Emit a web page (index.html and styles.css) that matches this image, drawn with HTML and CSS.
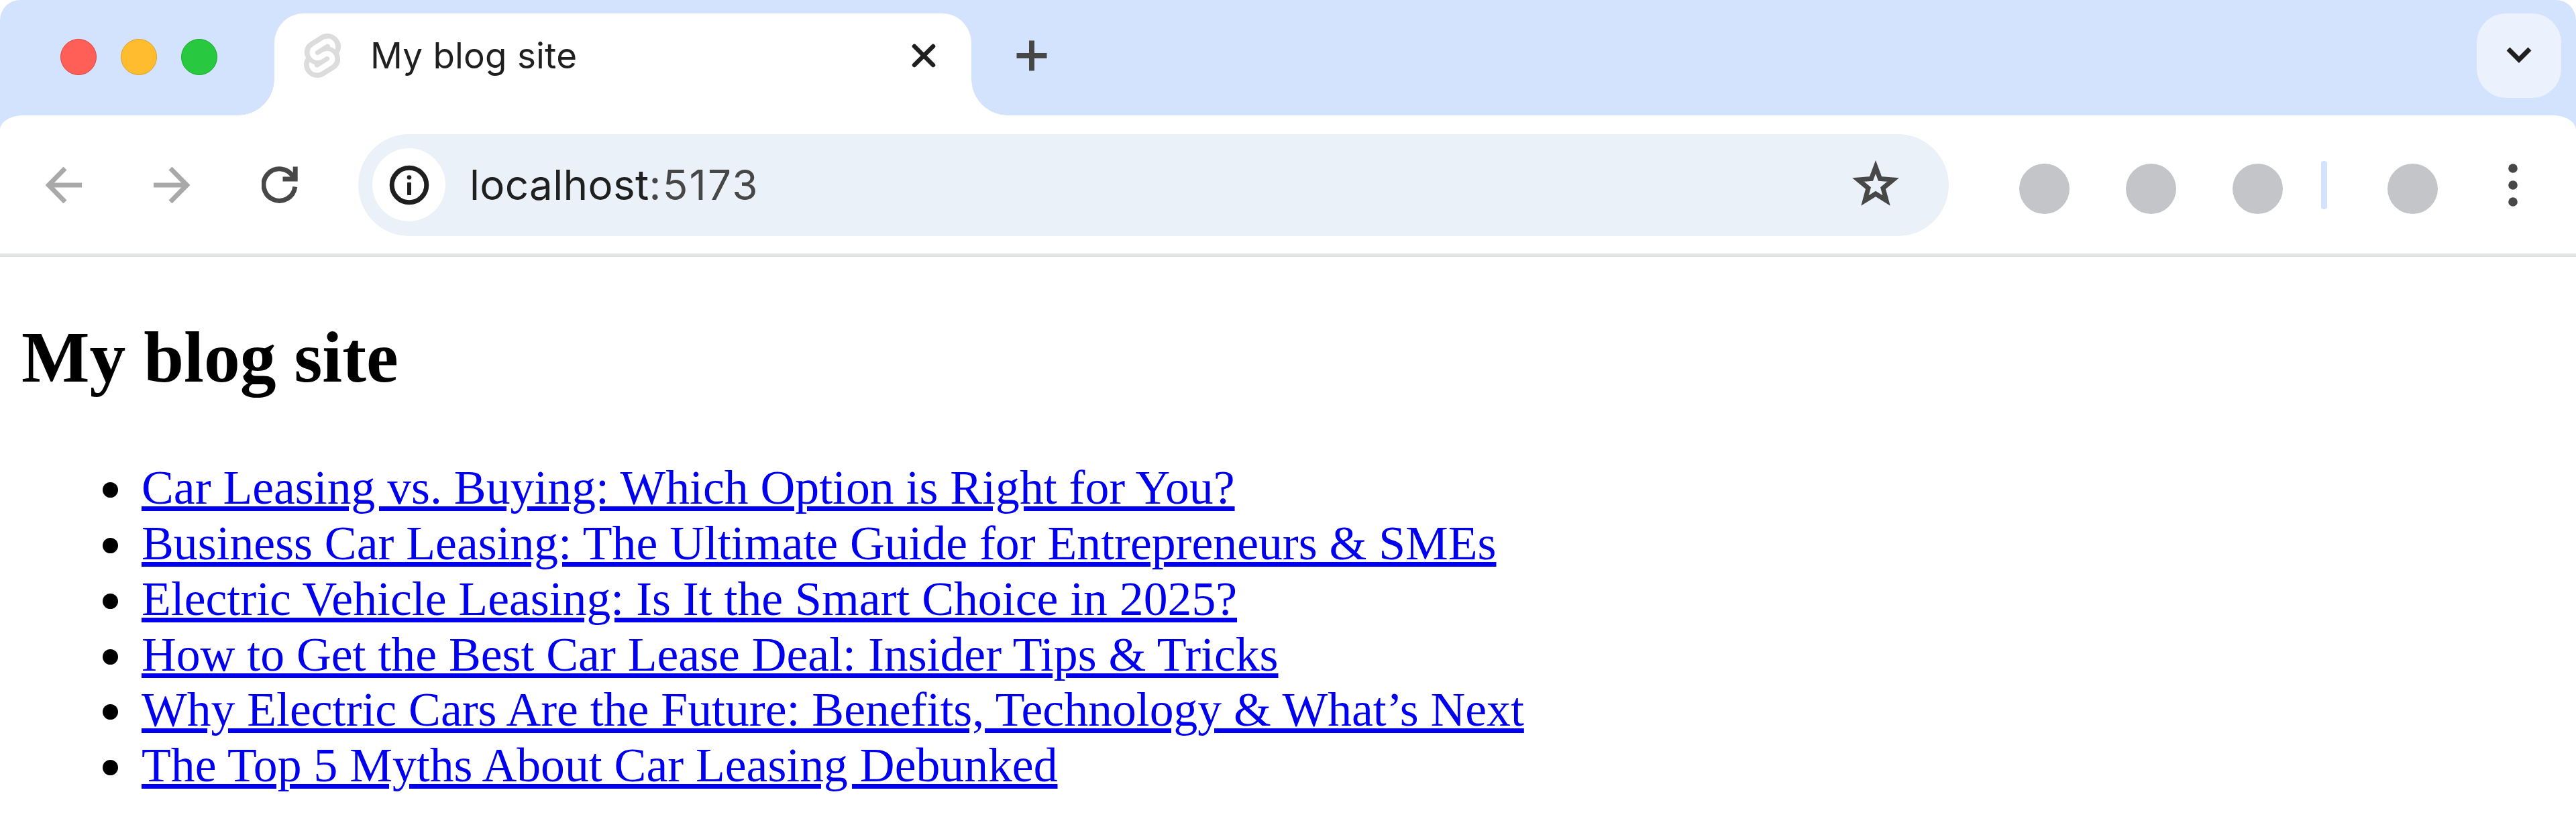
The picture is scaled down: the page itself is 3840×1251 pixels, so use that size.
FILE: index.html
```
<!DOCTYPE html>
<html lang="en">
<head>
    <meta charset="UTF-8">
    <meta name="viewport" content="width=device-width, initial-scale=1.0">
    <title>My blog site</title>
    <link rel="stylesheet" href="styles.css">
</head>
<body>
    <div class="browser">
        <!-- Tab strip -->
        <div class="tab-strip">
            <div class="window-buttons">
                <span class="dot red"></span>
                <span class="dot yellow"></span>
                <span class="dot green"></span>
            </div>

            <div class="tab">
                <svg class="favicon" viewBox="2 0 20 24" preserveAspectRatio="none">
                    <path d="M10.354 21.125a4.44 4.44 0 0 1-4.765-1.767 4.109 4.109 0 0 1-.703-3.107 3.898 3.898 0 0 1 .134-.522l.105-.321.287.21a7.21 7.21 0 0 0 2.186 1.092l.208.063-.02.208a1.253 1.253 0 0 0 .226.83 1.337 1.337 0 0 0 1.435.533 1.231 1.231 0 0 0 .343-.15l5.59-3.562a1.164 1.164 0 0 0 .524-.778 1.242 1.242 0 0 0-.211-.937 1.338 1.338 0 0 0-1.435-.533 1.23 1.23 0 0 0-.343.15l-2.133 1.36a4.078 4.078 0 0 1-1.135.499 4.44 4.44 0 0 1-4.765-1.766 4.108 4.108 0 0 1-.702-3.108 3.855 3.855 0 0 1 1.742-2.582l5.589-3.563a4.072 4.072 0 0 1 1.135-.499 4.44 4.44 0 0 1 4.765 1.767 4.109 4.109 0 0 1 .703 3.107 3.943 3.943 0 0 1-.134.522l-.105.321-.286-.21a7.204 7.204 0 0 0-2.187-1.093l-.208-.063.02-.207a1.255 1.255 0 0 0-.226-.831 1.337 1.337 0 0 0-1.435-.532 1.231 1.231 0 0 0-.343.15L8.62 9.368a1.162 1.162 0 0 0-.524.778 1.24 1.24 0 0 0 .211.937 1.338 1.338 0 0 0 1.435.533 1.235 1.235 0 0 0 .344-.151l2.132-1.36a4.067 4.067 0 0 1 1.135-.498 4.44 4.44 0 0 1 4.765 1.766 4.108 4.108 0 0 1 .702 3.108 3.857 3.857 0 0 1-1.742 2.583l-5.589 3.562a4.072 4.072 0 0 1-1.135.499m10.358-17.95C18.484-.015 14.082-.96 10.9 1.068L5.31 4.63a6.412 6.412 0 0 0-2.896 4.295 6.753 6.753 0 0 0 .666 4.336 6.43 6.43 0 0 0-.96 2.396 6.833 6.833 0 0 0 1.168 5.167c2.229 3.19 6.63 4.135 9.812 2.108l5.59-3.562a6.41 6.41 0 0 0 2.896-4.295 6.756 6.756 0 0 0-.665-4.336 6.429 6.429 0 0 0 .958-2.396 6.831 6.831 0 0 0-1.167-5.168Z"/>
                </svg>
                <span class="tab-title">My blog site</span>
                <svg class="tab-close" viewBox="0 0 36 36">
                    <path d="M4 4L32 32M32 4L4 32"/>
                </svg>
            </div>

            <svg class="new-tab" viewBox="0 0 46 46">
                <path d="M23 0.5V45.5M0.5 23H45.5"/>
            </svg>

            <div class="tab-search">
                <svg viewBox="0 0 40 28">
                    <path d="M4 4L20 20L36 4"/>
                </svg>
            </div>
        </div>

        <!-- Toolbar -->
        <div class="toolbar">
            <div class="nav">
                <svg class="arrow" viewBox="0 0 54 54">
                    <path d="M54 27H5M29 2L4.500 27L29 52"/>
                </svg>
                <svg class="arrow" viewBox="0 0 54 54">
                    <path d="M0 27H49M25 2L49.500 27L25 52"/>
                </svg>
                <svg class="reload" viewBox="0 0 54 56">
                    <path d="M49.800 30.500A23.500 23.800 0 1 1 47 16"/>
                    <path d="M50.200 0.500V19H31.500"/>
                </svg>
            </div>

            <div class="address-bar">
                <div class="site-info">
                    <svg viewBox="0 0 60 60">
                        <circle class="ring" cx="30" cy="30" r="25.800"/>
                        <circle cx="30" cy="18.500" r="3.300"/>
                        <rect x="27" y="26" width="6" height="19" rx="1"/>
                    </svg>
                </div>
                <span class="url">localhost<span class="port">:5173</span></span>
                <svg class="star" viewBox="0 0 70 68">
                    <path d="M35 10L41.500 27.500L61 29L46 41.500L51 60L35 50L19 60L24 41.500L9 29L28.500 27.500Z"/>
                </svg>
            </div>

            <div class="extensions">
                <span class="extension"></span>
                <span class="extension"></span>
                <span class="extension"></span>
                <span class="divider"></span>
                <span class="extension"></span>
            </div>

            <svg class="menu" viewBox="0 0 14 64">
                <circle cx="7" cy="7" r="6.800"/>
                <circle cx="7" cy="32" r="6.800"/>
                <circle cx="7" cy="57" r="6.800"/>
            </svg>
        </div>
    </div>

    <!-- Page content -->
    <main>
        <h1>My blog site</h1>
        <ul>
            <li><a href="#">Car Leasing vs. Buying: Which Option is Right for You?</a></li>
            <li><a href="#">Business Car Leasing: The Ultimate Guide for Entrepreneurs &amp; SMEs</a></li>
            <li><a href="#">Electric Vehicle Leasing: Is It the Smart Choice in 2025?</a></li>
            <li><a href="#">How to Get the Best Car Lease Deal: Insider Tips &amp; Tricks</a></li>
            <li><a href="#">Why Electric Cars Are the Future: Benefits, Technology &amp; What’s Next</a></li>
            <li><a href="#">The Top 5 Myths About Car Leasing Debunked</a></li>
        </ul>
    </main>
</body>
</html>
```

FILE: styles.css
```
* {
    box-sizing: border-box;
}

body {
    margin: 0;
    height: 1251px;
    overflow: hidden;
    background-color: #fff;
    font-family: "Liberation Serif", "Times New Roman", serif;
}

svg {
    display: block;
    flex: none;
    fill: none;
}

.browser {
    height: 383px;
    background-color: #d3e3fd;
    border-radius: 30px 30px 0 0;
    font-family: Inter, "Liberation Sans", sans-serif;
}

/* Tab strip */
.tab-strip {
    display: flex;
    align-items: flex-start;
    height: 172px;
    padding: 20px 22px 0 90px;
}

.window-buttons {
    display: flex;
    gap: 36px;
    width: 319px;
    padding-top: 38px;
}

.dot {
    width: 54px;
    height: 54px;
    border-radius: 50%;
}

.red {
    background-color: #ff5f57;
    border: 1px solid #e0443e;
}

.yellow {
    background-color: #febc2e;
    border: 1px solid #dea123;
}

.green {
    background-color: #28c840;
    border: 1px solid #1aab29;
}

.tab {
    position: relative;
    display: flex;
    align-items: center;
    width: 1039px;
    height: 153px;
    padding: 0 53px 27px 44px;
    background-color: #fff;
    border-radius: 44px 44px 0 0;
}

/* rounded feet of the active tab */
.tab::before,
.tab::after {
    content: "";
    position: absolute;
    bottom: 1px;
    width: 54px;
    height: 54px;
}

.tab::before {
    right: 100%;
    background: radial-gradient(circle at 0 0, transparent 53.5px, #fff 54px);
}

.tab::after {
    left: 100%;
    background: radial-gradient(circle at 100% 0, transparent 53.5px, #fff 54px);
}

.favicon {
    width: 55px;
    height: 66px;
    fill: #dcdcdc;
}

.tab-title {
    flex: 1;
    margin-left: 44px;
    font-size: 53px;
    letter-spacing: 0.2px;
    color: #1f1f1f;
    white-space: nowrap;
}

.tab-close {
    width: 36px;
    height: 36px;
    stroke: #1f1f1f;
    stroke-width: 6.5;
    stroke-linecap: round;
}

.new-tab {
    width: 46px;
    height: 46px;
    margin: 40px 0 0 67px;
    stroke: #474747;
    stroke-width: 8;
}

.tab-search {
    display: flex;
    justify-content: center;
    padding-top: 49px;
    width: 126px;
    height: 126px;
    margin-left: auto;
    background-color: #ebf2fe;
    border-radius: 44px;
}

.tab-search svg {
    width: 40px;
    height: 28px;
    stroke: #1f1f1f;
    stroke-width: 7;
}

/* Toolbar */
.toolbar {
    display: flex;
    align-items: center;
    height: 211px;
    padding: 1px 87px 0 68px;
    background-color: #fff;
    border-bottom: 5px solid #e1e4e3;
    border-radius: 34px 34px 0 0 / 22px 22px 0 0;
}

.nav {
    display: flex;
    align-items: center;
    gap: 107px;
    width: 466px;
}

.arrow {
    width: 54px;
    height: 54px;
    stroke: #a9a9a9;
    stroke-width: 7;
}

.reload {
    width: 54px;
    height: 56px;
    stroke: #474747;
    stroke-width: 7;
}

.address-bar {
    display: flex;
    align-items: center;
    width: 2371px;
    height: 152px;
    padding: 0 74px 0 21px;
    background-color: #ebf1f9;
    border-radius: 76px;
}

.site-info {
    display: flex;
    align-items: center;
    justify-content: center;
    width: 109px;
    height: 109px;
    background-color: #fff;
    border-radius: 50%;
}

.site-info svg {
    width: 60px;
    height: 60px;
    fill: #1f1f1f;
}

.site-info .ring {
    fill: none;
    stroke: #1f1f1f;
    stroke-width: 7;
}

.url {
    flex: 1;
    margin-left: 36px;
    font-size: 62px;
    letter-spacing: 0.3px;
    color: #1f1f1f;
}

.port {
    letter-spacing: 2.2px;
    color: #474747;
}

.star {
    width: 70px;
    height: 68px;
    margin-bottom: 5px;
    stroke: #474747;
    stroke-width: 7;
}

.extensions {
    display: flex;
    align-items: center;
    gap: 84px;
    margin-left: 105px;
    padding-top: 11px;
}

.extension {
    width: 75px;
    height: 75px;
    background-color: #c4c5c9;
    border-radius: 50%;
}

.divider {
    width: 9px;
    height: 72px;
    margin: 0 6px 10px -27px;
    background-color: #d3e3fd;
    border-radius: 4px;
}

.menu {
    width: 14px;
    height: 64px;
    margin-left: auto;
    fill: #474747;
}

/* Page content */
main {
    padding: 88px 0 0 32px;
}

h1 {
    margin: 0;
    font-size: 107.6px;
    line-height: 124px;
    color: #000;
}

ul {
    margin: 91px 0 0;
    padding: 0 0 0 121px;
    list-style: none;
}

li {
    display: flex;
    align-items: center;
    gap: 35px;
    height: 82.86px;
    font-size: 71.7px;
    line-height: 82.86px;
    white-space: nowrap;
}

li::before {
    content: "";
    width: 23px;
    height: 23px;
    margin-top: 6px;
    background-color: #000;
    border-radius: 50%;
}

a {
    color: #0000ee;
    text-decoration: underline;
    text-decoration-thickness: 7px;
    text-underline-offset: 4px;
}
```
